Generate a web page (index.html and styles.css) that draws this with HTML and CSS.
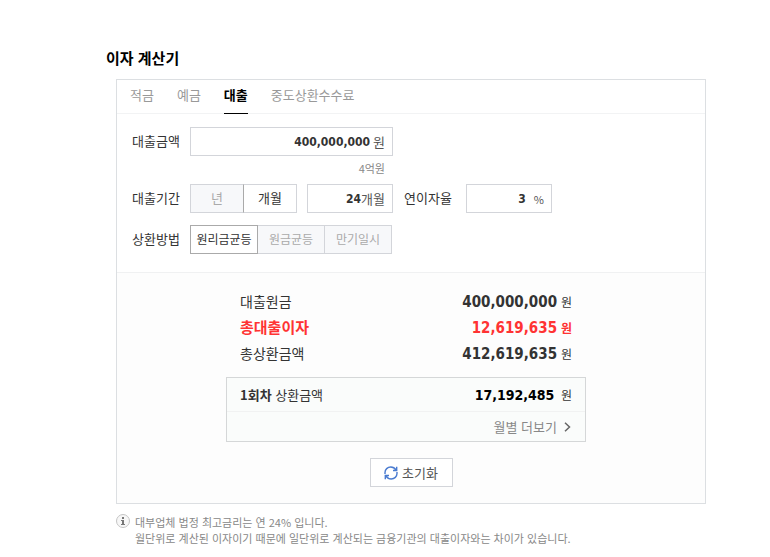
FILE: index.html
```html
<!DOCTYPE html>
<html lang="ko">
<head>
  <meta charset="UTF-8">
  <meta name="viewport" content="width=device-width, initial-scale=1.0">
  <title>이자 계산기</title>
  <link rel="stylesheet" href="styles.css">
</head>
<body>

  <main class="page">
    <h1>이자 계산기</h1>

    <div class="calculator">
      <nav class="tabs">
        <a href="#savings">적금</a>
        <a href="#deposit">예금</a>
        <a href="#loan" class="on" aria-current="page">대출</a>
        <a href="#fee">중도상환수수료</a>
      </nav>

      <form class="conditions">
        <div class="row">
          <label class="name" for="amount">대출금액</label>
          <div class="amount">
            <div class="field">
              <input type="text" id="amount" value="400,000,000">
              <span class="unit">원</span>
            </div>
            <p class="korean">4억원</p>
          </div>
        </div>
        <div class="row">
          <label class="name" for="period">대출기간</label>
          <div class="toggle period">
            <button type="button">년</button>
            <button type="button" class="plain">개월</button>
          </div>
          <div class="field small">
            <input type="text" id="period" value="24">
            <span>개월</span>
          </div>
          <label class="rate" for="rate">연이자율</label>
          <div class="field small">
            <input type="text" id="rate" value="3">
            <span class="percent">%</span>
          </div>
        </div>
        <div class="row">
          <span class="name">상환방법</span>
          <div class="toggle method">
            <button type="button" class="on">원리금균등</button>
            <button type="button">원금균등</button>
            <button type="button">만기일시</button>
          </div>
        </div>
      </form>

      <section class="result">
        <div class="summary">
          <dl class="totals">
            <div><dt>대출원금</dt><dd><strong>400,000,000</strong> <span>원</span></dd></div>
            <div class="interest"><dt>총대출이자</dt><dd><strong>12,619,635</strong> <span>원</span></dd></div>
            <div><dt>총상환금액</dt><dd><strong>412,619,635</strong> <span>원</span></dd></div>
          </dl>
          <div class="monthly">
            <div class="first">
              <span><b>1회차</b> 상환금액</span>
              <span class="pay"><strong>17,192,485</strong> <span>원</span></span>
            </div>
            <a href="#monthly" class="more">월별 더보기
              <svg width="7" height="10" viewBox="0 0 7 10"><path d="M1 .8 5.5 5 1 9.2" fill="none" stroke="#666" stroke-width="1.5"/></svg>
            </a>
          </div>
        </div>
        <button type="button" class="reset">
          <svg width="14" height="14" viewBox="0 0 14 14" fill="none" stroke="#4a7bd0" stroke-width="1.4">
            <path d="M1 8V6.500C1 3.500 3.500 1 6.800 1 9 1 10.800 2.200 12 4"/>
            <path d="M13 6v1.500C13 10.500 10.500 13 7.200 13 5 13 3.200 11.800 2 10"/>
            <path d="M12.700.8V4.500H9M1.300 13.200V9.500H5"/>
          </svg>
          초기화
        </button>
      </section>
    </div>

    <div class="notice">
      <svg width="14" height="14" viewBox="0 0 14 14">
        <circle cx="7" cy="7" r="6.500" fill="#f7f7f7" stroke="#c4c4c4"/>
        <path d="M6 3h2v2H6zM5 6h3v4h1v1H5v-1h1V7H5z" fill="#777"/>
      </svg>
      <p>대부업체 법정 최고금리는 연 24% 입니다.<br>월단위로 계산된 이자이기 때문에 일단위로 계산되는 금융기관의 대출이자와는 차이가 있습니다.</p>
    </div>
  </main>

</body>
</html>
```
FILE: styles.css
```css
* {
  box-sizing: border-box;
}

body {
  margin: 0;
  background-color: #fff;
  color: #333;
  font-family: "Noto Sans CJK KR", sans-serif;
  font-size: 13px;
  line-height: 20px;
}

h1, p, dl, dd {
  margin: 0;
}

a {
  color: inherit;
  text-decoration: none;
}

button, input {
  font: inherit;
  color: inherit;
}

button {
  padding: 0;
  cursor: pointer;
}

strong, input {
  font-family: "DejaVu Sans Condensed", "Noto Sans", sans-serif;
  font-weight: bold;
}

.page {
  padding: 48px 64px 0 106px;
}

h1 {
  color: #000;
  font-size: 15px;
  line-height: 20px;
}

.calculator {
  margin: 11px 0 0 10px;
  border: 1px solid #dcdfe2;
}

.tabs {
  display: flex;
  gap: 23px;
  height: 34px;
  padding-left: 13px;
  border-bottom: 1px solid #f2f3f4;
  color: #999;
  line-height: 30px;
}

.tabs .on {
  height: 34px;
  border-bottom: 1px solid #000;
  color: #000;
  font-weight: bold;
}

.conditions {
  padding: 13px 16px 18px 15px;
  border-bottom: 1px solid #f0f1f2;
}

.row {
  display: flex;
  line-height: 28px;
}

.row + .row {
  margin-top: 12px;
}

.name {
  width: 58px;
}

.amount {
  width: 203px;
}

.field {
  display: flex;
  align-items: center;
  height: 29px;
  padding-right: 7px;
  border: 1px solid #d3d5da;
  background-color: #fff;
  color: #555;
  line-height: 26px;
}

.field input {
  flex: 1;
  min-width: 0;
  padding: 0;
  border: 0;
  outline: 0;
  background: none;
  color: #333;
  font-size: 12px;
  text-align: right;
}

.small {
  width: 86px;
}

.unit {
  margin-left: 3px;
}

.percent {
  margin-left: 8px;
  font-size: 11px;
}

.korean {
  height: 16px;
  padding: 4px 8px 0 0;
  color: #888;
  font-size: 11px;
  line-height: 16px;
  text-align: right;
}

.toggle {
  display: flex;
}

.toggle button {
  flex: 1;
  height: 29px;
  padding-bottom: 2px;
  border: 1px solid #d3d5da;
  background-color: #f7f8fa;
  color: #aaa;
  line-height: 20px;
}

.toggle button + button {
  border-left: 0;
}

.toggle .on {
  border-color: #aaa;
  background-color: #fff;
  color: #333;
}

.period {
  width: 107px;
  margin-right: 10px;
}

.toggle .plain {
  background-color: #fff;
  color: #333;
}

.period button:first-child {
  border-right-color: #aaa;
}

.method {
  width: 202px;
  font-size: 12px;
}

.rate {
  width: 73px;
  padding-left: 11px;
}

.result {
  padding: 15px 0 16px;
  background-color: #fdfdfd;
}

.summary {
  width: 370px;
  max-width: 100%;
  margin: 0 auto;
  padding-right: 10px;
}

.totals {
  padding: 0 14px;
  font-size: 14px;
  line-height: 26px;
}

.totals div, .first {
  display: flex;
  justify-content: space-between;
}

.totals div {
  height: 26px;
}

.totals strong {
  font-size: 15px;
}

.totals dd span {
  font-size: 12px;
}

.totals .interest {
  color: #ff3333;
  font-weight: bold;
}

.interest dt {
  font-size: 15px;
}

.monthly {
  margin-top: 11px;
  border: 1px solid #d5d7d8;
  background-color: #fafcfb;
}

.first {
  height: 34px;
  padding: 0 13px;
  border-bottom: 1px solid #f1f2f2;
  line-height: 33px;
}

.pay strong {
  margin-right: 3px;
  color: #000;
  font-size: 14px;
}

.pay span {
  font-size: 12px;
}

.more {
  display: flex;
  align-items: center;
  justify-content: flex-end;
  gap: 7px;
  height: 29px;
  padding-right: 14px;
  color: #888;
}

.reset {
  display: flex;
  align-items: center;
  justify-content: center;
  gap: 4px;
  width: 83px;
  height: 29px;
  margin: 16px auto 0;
  border: 1px solid #d3d5da;
  background-color: #fff;
  color: #555;
  line-height: 20px;
}

.notice {
  display: flex;
  gap: 5px;
  margin: 10px 0 0 10px;
  color: #888;
  font-size: 11px;
  line-height: 16px;
}

.notice svg {
  flex: none;
}
```
